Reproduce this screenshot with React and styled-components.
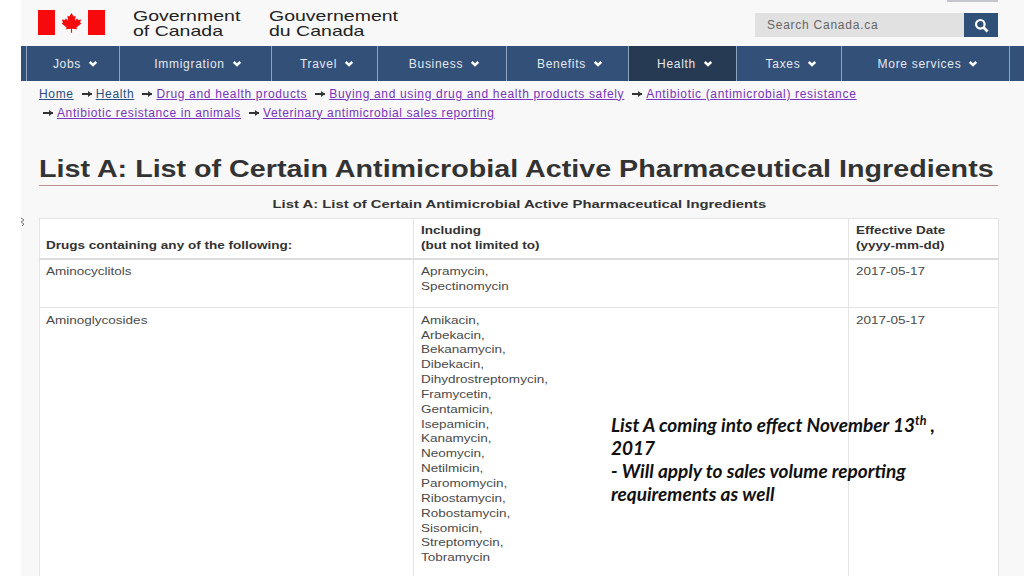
import React from "react";
import styled, { createGlobalStyle } from "styled-components";

const navItems = [
  { label: "Jobs", width: 93 },
  { label: "Immigration", width: 152 },
  { label: "Travel", width: 106 },
  { label: "Business", width: 129 },
  { label: "Benefits", width: 122 },
  { label: "Health", width: 108, active: true },
  { label: "Taxes", width: 105 },
  { label: "More services", width: 169 },
];

const crumbsOne = [
  { label: "Home" },
  { label: "Health" },
  { label: "Drug and health products", visited: true },
  { label: "Buying and using drug and health products safely", visited: true },
  { label: "Antibiotic (antimicrobial) resistance", visited: true },
];

const crumbsTwo = [
  { label: "Antibiotic resistance in animals", visited: true },
  { label: "Veterinary antimicrobial sales reporting", visited: true },
];

const glycosides = [
  "Amikacin,", "Arbekacin,", "Bekanamycin,", "Dibekacin,", "Dihydrostreptomycin,",
  "Framycetin,", "Gentamicin,", "Isepamicin,", "Kanamycin,", "Neomycin,", "Netilmicin,",
  "Paromomycin,", "Ribostamycin,", "Robostamycin,", "Sisomicin,", "Streptomycin,", "Tobramycin",
];

export default function App() {
  return (
    <Page>
      <GlobalStyle />
      <Sheet>
        <TopBar>
          <Brand>
            <Flag viewBox="0 0 67 25">
              <rect width="17" height="25" fill="#f60a0c" />
              <rect x="50" width="17" height="25" fill="#f60a0c" />
              <path
                fill="#f60a0c"
                d="M33.5 3l-2.2 3.6-2-.9.9 5-2.5-2.4-.6 1.7-3.2-.5 1 3.3-1.3.7 5 3.9-.6 1.9 5-.6-.1 4h1.2l-.1-4 5 .6-.6-1.9 5-3.9-1.3-.7 1-3.3-3.2.5-.6-1.7-2.5 2.4.9-5-2 .9z"
              />
            </Flag>
            <Wordmark><Wide $x={1.3}>Government<br />of Canada</Wide></Wordmark>
            <Wordmark><Wide $x={1.3}>Gouvernement<br />du Canada</Wide></Wordmark>
          </Brand>
          <Search>
            <SearchField>Search Canada.ca</SearchField>
            <SearchButton aria-label="Search">
              <svg width="15" height="15" viewBox="0 0 15 15" fill="none" stroke="#fff">
                <circle cx="6.3" cy="6.3" r="4.3" strokeWidth="2.2" />
                <path d="M9.6 9.6l4 4" strokeWidth="2.8" />
              </svg>
            </SearchButton>
          </Search>
          <TopTab />
        </TopBar>
        <Nav>
          {navItems.map((item) => (
            <NavItem key={item.label} $width={item.width} $active={item.active}>
              {item.label}
              <svg width="8" height="6" viewBox="0 0 8 6" fill="none" stroke="#fff" strokeWidth="2.5">
                <path d="M.7 1l3.3 3L7.3 1" />
              </svg>
            </NavItem>
          ))}
        </Nav>
        <Breadcrumbs>
          <CrumbRow>
            {crumbsOne.map((crumb, i) => (
              <Crumb key={crumb.label}>
                {i > 0 && <Arrow />}
                <CrumbLink $visited={crumb.visited}>{crumb.label}</CrumbLink>
              </Crumb>
            ))}
          </CrumbRow>
          <CrumbRow $indent>
            {crumbsTwo.map((crumb) => (
              <Crumb key={crumb.label}>
                <Arrow />
                <CrumbLink $visited={crumb.visited}>{crumb.label}</CrumbLink>
              </Crumb>
            ))}
          </CrumbRow>
        </Breadcrumbs>
        <Title>
          <Wide $x={1.247}>List A: List of Certain Antimicrobial Active Pharmaceutical Ingredients</Wide>
        </Title>
        <Table>
          <caption>
            <Wide $x={1.29} $center>List A: List of Certain Antimicrobial Active Pharmaceutical Ingredients</Wide>
          </caption>
          <colgroup>
            <col style={{ width: 374 }} />
            <col style={{ width: 435 }} />
            <col />
          </colgroup>
          <thead>
            <tr>
              <th><Wide $x={1.175}>Drugs containing any of the following:</Wide></th>
              <th><Wide $x={1.175}>Including<br />(but not limited to)</Wide></th>
              <th><Wide $x={1.175}>Effective Date<br />(yyyy-mm-dd)</Wide></th>
            </tr>
          </thead>
          <tbody>
            <tr>
              <td><Wide $x={1.175}>Aminocyclitols</Wide></td>
              <td><Wide $x={1.175}>Apramycin,<br />Spectinomycin</Wide></td>
              <td><Wide $x={1.175}>2017-05-17</Wide></td>
            </tr>
            <tr>
              <td><Wide $x={1.175}>Aminoglycosides</Wide></td>
              <td>
                <Wide $x={1.175}>
                  {glycosides.map((name) => (
                    <div key={name}>{name}</div>
                  ))}
                </Wide>
              </td>
              <td><Wide $x={1.175}>2017-05-17</Wide></td>
            </tr>
          </tbody>
        </Table>
      </Sheet>
      <Speck viewBox="0 0 6 10" fill="none" stroke="#777" strokeWidth="1">
        <path d="M1 1l3 2-3 2 3 2-2 2" />
      </Speck>
      <Callout>
        List A coming into effect November 13<sup>th</sup> , 2017
        <br />
        - Will apply to sales volume reporting requirements as well
      </Callout>
    </Page>
  );
}

const GlobalStyle = createGlobalStyle`
  html, body {
    margin: 0;
    height: 576px;
    overflow: hidden;
    background: #fff;
    font-family: "Liberation Sans", Arial, sans-serif;
  }
`;

const Page = styled.div`
  position: relative;
  width: 1024px;
  height: 576px;
  overflow: hidden;
  padding-left: 21px;
  box-sizing: border-box;
`;

const Sheet = styled.div`
  height: 100%;
  background: #f8f8f8;
`;

// the source page is a screenshot pulled wider than it was tall
const Wide = styled.span`
  display: inline-block;
  white-space: nowrap;
  transform: scaleX(${(p) => p.$x});
  transform-origin: ${(p) => (p.$center ? "center" : "left")} center;
`;

const TopBar = styled.header`
  position: relative;
  height: 46px;
  display: flex;
  justify-content: space-between;
  padding: 0 26px 0 17px;
`;

const Brand = styled.div`
  display: flex;
  align-items: flex-start;
`;

const Flag = styled.svg`
  width: 67px;
  height: 25px;
  margin: 10px 28px 0 0;
`;

const Wordmark = styled.div`
  width: 136px;
  padding-top: 8px;
  font-size: 15px;
  line-height: 15px;
  color: #222;
`;

const Search = styled.div`
  display: flex;
  margin-top: 13px;
  height: 24px;
`;

const SearchField = styled.div`
  width: 197px;
  padding-left: 12px;
  background: #e1e1e1;
  color: #666;
  font-size: 12px;
  line-height: 25px;
  letter-spacing: 0.75px;
`;

const SearchButton = styled.div`
  width: 34px;
  display: flex;
  align-items: center;
  justify-content: center;
  background: #2f5078;
`;

const TopTab = styled.div`
  position: absolute;
  top: 0;
  right: 26px;
  width: 51px;
  height: 2px;
  background: #c4c6cc;
`;

const Nav = styled.nav`
  height: 35px;
  display: flex;
  padding-left: 5px;
  background: #335078;
`;

const NavItem = styled.div`
  width: ${(p) => p.$width}px;
  box-sizing: border-box;
  padding-left: 4px;
  display: flex;
  align-items: center;
  justify-content: center;
  gap: 8px;
  border-left: 1px solid #8ea3bd;
  background: ${(p) => (p.$active ? "#263a54" : "transparent")};
  color: #e4e8ee;
  font-size: 12px;
  letter-spacing: 0.7px;
  &:last-child {
    border-right: 1px solid #8ea3bd;
  }
`;

const Breadcrumbs = styled.div`
  height: 70px;
  padding: 3px 0 0 18px;
  font-size: 12px;
  letter-spacing: 0.67px;
`;

const CrumbRow = styled.div`
  display: flex;
  height: 19px;
  align-items: center;
  margin-left: ${(p) => (p.$indent ? "-4px" : "0")};
  letter-spacing: ${(p) => (p.$indent ? "0.62px" : "inherit")};
`;

const Crumb = styled.span`
  display: flex;
  align-items: center;
`;

const CrumbLink = styled.span`
  color: ${(p) => (p.$visited ? "#7834bc" : "#284f80")};
  text-decoration: underline;
`;

const Arrow = styled.span`
  position: relative;
  width: 10px;
  height: 2px;
  margin: 0 4px 0 8px;
  background: #333;
  &::after {
    content: "";
    position: absolute;
    right: 0;
    top: -2px;
    border-left: 4px solid #333;
    border-top: 3px solid transparent;
    border-bottom: 3px solid transparent;
  }
`;

const Title = styled.h1`
  margin: 0 26px 0 18px;
  padding-bottom: 3px;
  border-bottom: 1px solid #b98f8f;
  font-size: 23px;
  line-height: 30px;
  height: 28px;
  white-space: nowrap;
  color: #333;
`;

const Table = styled.table`
  width: 960px;
  margin: 0 0 0 18px;
  table-layout: fixed;
  border-collapse: collapse;
  background: #fff;
  font-size: 11.5px;
  line-height: 14.85px;
  color: #4a4a4a;

  caption {
    height: 32px;
    padding-top: 11px;
    box-sizing: border-box;
    font-size: 11.5px;
    font-weight: bold;
    white-space: nowrap;
    color: #333;
    background: #f8f8f8;
  }
  th, td {
    border: 1px solid #e4e4e4;
    padding: 5px 7px;
    text-align: left;
    vertical-align: top;
  }
  th:first-child, td:first-child {
    padding-left: 6px;
  }
  th {
    vertical-align: bottom;
    padding-top: 4px;
    border-bottom: 2px solid #ddd;
    color: #333;
  }
  tbody tr:first-child td {
    height: 38px;
    padding-top: 4px;
  }
  tbody tr:last-child td {
    padding-bottom: 20px;
  }
`;

const Speck = styled.svg`
  position: absolute;
  left: 20px;
  top: 217px;
  width: 6px;
  height: 10px;
`;

const Callout = styled.div`
  position: absolute;
  left: 611px;
  top: 413px;
  width: 340px;
  font-family: Lato, "Open Sans", sans-serif;
  font-size: 19px;
  font-weight: 700;
  font-style: italic;
  line-height: 23px;
  color: #111;

  sup {
    font-size: 12.5px;
    line-height: 0;
  }
`;
